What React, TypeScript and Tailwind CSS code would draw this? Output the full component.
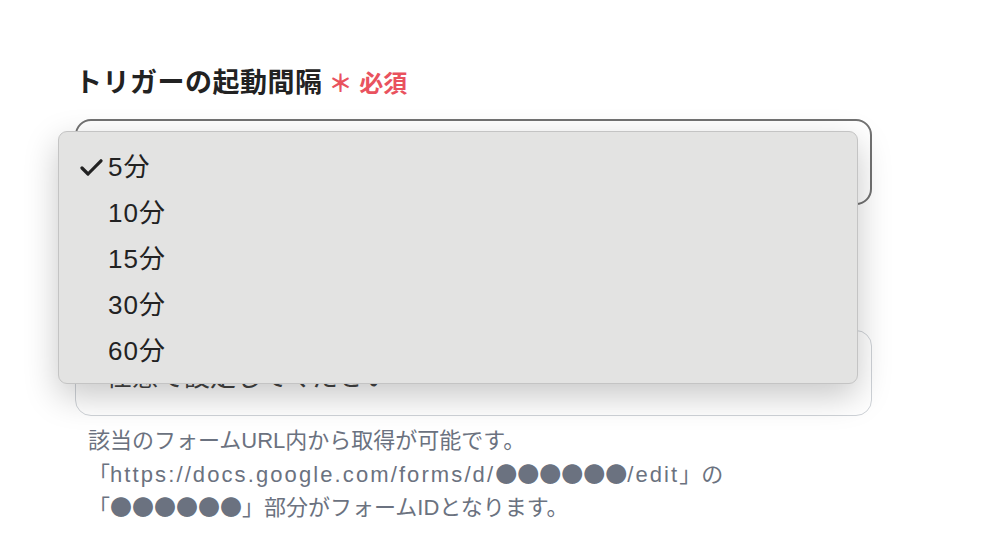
import React from "react";

const options = ["5分", "10分", "15分", "30分", "60分"];

const cjk = { fontFamily: '"Noto Sans CJK JP", sans-serif' };

const CheckMark = () => (
  <svg width="23" height="17" viewBox="0 0 23 17" fill="none" className="shrink-0">
    <path
      d="M2 9 L8 15 L21 1.8"
      stroke="#222222"
      strokeWidth="3.2"
      strokeLinecap="round"
      strokeLinejoin="round"
    />
  </svg>
);

const Dots = () => (
  <span className="leading-none" style={cjk}>
    ●●●●●●
  </span>
);

const App = () => {
  const selected = "5分";

  return (
    <div
      className="min-h-[538px] w-full bg-white pt-[64px]"
      style={{ fontFamily: '"Liberation Sans", "Noto Sans CJK JP", sans-serif' }}
    >
      <div className="ml-[75px] w-[797px]">
        {/* label */}
        <div className="flex items-center gap-[6px] leading-[39px]">
          <span className="text-[27px] font-bold tracking-[0.5px] text-[#222222]">
            トリガーの起動間隔
          </span>
          <span className="text-[24px] font-bold text-[#e9525e]">＊ 必須</span>
        </div>

        {/* select with open menu */}
        <div className="relative mt-[16px]">
          <div className="flex h-[86px] items-center rounded-[16px] border-2 border-[#727272] bg-white pl-[30px] text-[26px] text-[#222222]">
            {selected}
          </div>

          <div className="absolute left-[-17px] top-[12px] z-10 w-[800px] rounded-[9px] border border-[#c4c4c4] bg-[#e3e3e2] pb-[9px] pt-[12px] shadow-[0_12px_34px_rgba(0,0,0,0.22)]">
            {options.map((opt) => (
              <div key={opt} className="flex h-[46px] items-center">
                <div className="flex w-[49px] justify-end pr-[5px]">
                  {opt === selected && <CheckMark />}
                </div>
                <span className="text-[26px] tracking-[1px] text-[#222222]">{opt}</span>
              </div>
            ))}
          </div>
        </div>

        <div className="mt-[125px] flex h-[86px] items-center rounded-[16px] border-[1.5px] border-[#cfd3d8] bg-white pl-[30px] pt-[8px] text-[26px] text-[#444444]">
          任意で設定してください
        </div>

        <div className="mt-[8px] pl-[13px] text-[22px] leading-[33.5px] text-[#6b7280]">
          <p className="h-[33.5px]">該当のフォームURL内から取得が可能です。</p>
          <p className="h-[33.5px]">
            「<span className="tracking-[2.1px]">https://docs.google.com/forms/d/</span>
            <Dots />
            <span className="tracking-[2.1px]">/edit</span>」の
          </p>
          <p className="h-[33.5px]">
            「<Dots />」部分がフォームIDとなります。
          </p>
        </div>
      </div>
    </div>
  );
};

export default App;
